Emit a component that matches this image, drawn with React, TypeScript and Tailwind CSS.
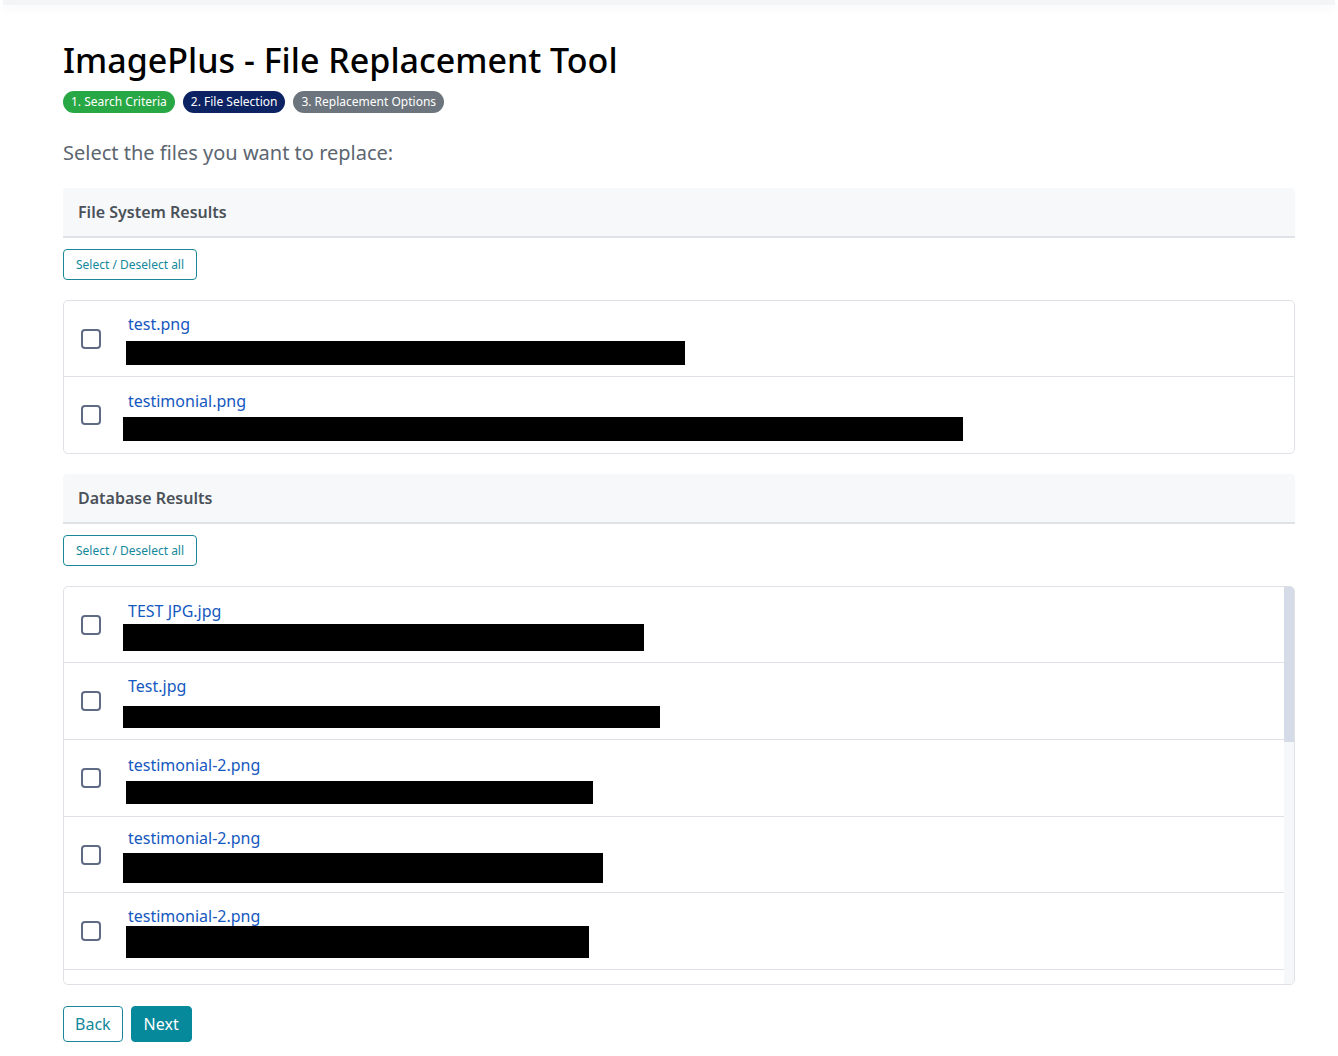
import React from "react";

type Row = { name: string; barStart: number; barWidth: number; barH: number; barMt: number; h: number };

const fsRows: Row[] = [
  { name: "test.png", barStart: 126, barWidth: 559, barH: 24, barMt: 5, h: 76 },
  { name: "testimonial.png", barStart: 123, barWidth: 840, barH: 24, barMt: 4, h: 76 },
];

const dbRows: Row[] = [
  { name: "TEST JPG.jpg", barStart: 123, barWidth: 521, barH: 27, barMt: 1, h: 76 },
  { name: "Test.jpg", barStart: 123, barWidth: 537, barH: 22, barMt: 8, h: 77 },
  { name: "testimonial-2.png", barStart: 126, barWidth: 467, barH: 23, barMt: 4, h: 77 },
  { name: "testimonial-2.png", barStart: 123, barWidth: 480, barH: 30, barMt: 3, h: 76 },
  { name: "testimonial-2.png", barStart: 126, barWidth: 463, barH: 32, barMt: -2, h: 77 },
  { name: "testimonial-2.png", barStart: 126, barWidth: 470, barH: 24, barMt: 4, h: 77 },
  { name: "testimonial-2.png", barStart: 126, barWidth: 470, barH: 24, barMt: 4, h: 76 },
];

function FileRow({ row, last }: { row: Row; last?: boolean }) {
  return (
    <div
      className={`flex items-center shrink-0 ${last ? "" : "border-b border-[#dee2e6]"}`}
      style={{ height: row.h }}
    >
      <div className="pl-[17px] w-[64px] shrink-0">
        <div className="w-[20px] h-[20px] rounded-[4px] border-2 border-[#5f6b85]" />
      </div>
      <div className="flex flex-col">
        <a className="text-[16px] leading-[24px] text-[#1458c0]">{row.name}</a>
        <div
          className="bg-black"
          style={{ marginLeft: row.barStart - 128, width: row.barWidth, height: row.barH, marginTop: row.barMt }}
        />
      </div>
    </div>
  );
}

function SectionHeader({ title }: { title: string }) {
  return (
    <div className="h-[50px] bg-[#f7f8fa] border-b-2 border-[#dfe2e6] rounded-t-[4px] flex items-center px-[15px]">
      <span className="text-[16px] font-semibold text-[#4a5159]">{title}</span>
    </div>
  );
}

function OutlineBtn({ children }: { children: React.ReactNode }) {
  return (
    <button className="h-[31px] px-[12px] border border-[#1a8798] rounded-[4px] text-[12px] text-[#13889b] bg-white">
      {children}
    </button>
  );
}

export default function App() {
  return (
    <div className="min-h-[1056px] bg-white" style={{ fontFamily: '"Noto Sans", "Open Sans", sans-serif' }}>
      <div className="h-[5px] mx-[3px] bg-[#f4f5f7] shadow-[0_4px_10px_rgba(0,0,0,0.04)]" />
      <div className="ml-[63px] w-[1232px]">
        <h1 className="mt-[33px] text-[34px] leading-[44px] font-medium text-black">
          ImagePlus - File Replacement Tool
        </h1>
        <div className="flex gap-[8px] mt-[9px]">
          <span className="h-[22px] px-[8px] rounded-full bg-[#28a745] text-white text-[12px] leading-[22px]">1. Search Criteria</span>
          <span className="h-[22px] px-[8px] rounded-full bg-[#0b2263] text-white text-[12px] leading-[22px]">2. File Selection</span>
          <span className="h-[22px] px-[8px] rounded-full bg-[#6c757d] text-white text-[12px] leading-[22px]">3. Replacement Options</span>
        </div>
        <p className="mt-[25px] text-[20px] leading-[30px] text-[#5c6670]">Select the files you want to replace:</p>

        <div className="mt-[20px]">
          <SectionHeader title="File System Results" />
          <div className="mt-[11px]">
            <OutlineBtn>Select / Deselect all</OutlineBtn>
          </div>
          <div className="mt-[20px] border border-[#dee2e6] rounded-[5px] overflow-hidden">
            {fsRows.map((r, i) => (
              <FileRow key={i} row={r} last={i === fsRows.length - 1} />
            ))}
          </div>
        </div>

        <div className="mt-[20px]">
          <SectionHeader title="Database Results" />
          <div className="mt-[11px]">
            <OutlineBtn>Select / Deselect all</OutlineBtn>
          </div>
          <div className="mt-[20px] border border-[#dee2e6] rounded-[5px] overflow-hidden flex h-[399px]">
            <div className="flex-1 flex flex-col overflow-hidden">
              {dbRows.map((r, i) => (
                <FileRow key={i} row={r} />
              ))}
            </div>
            <div className="w-[10px] shrink-0 bg-[#f6f7f9]">
              <div className="h-[155px] bg-[#d5dce8]" />
            </div>
          </div>
        </div>

        <div className="flex gap-[8px] mt-[21px]">
          <button className="h-[36px] px-[11px] border border-[#1a8798] rounded-[4px] text-[16px] text-[#13889b] bg-white">Back</button>
          <button className="h-[36px] px-[12px] border border-[#06899b] rounded-[4px] text-[16px] text-white bg-[#06899b]">Next</button>
        </div>
      </div>
    </div>
  );
}
